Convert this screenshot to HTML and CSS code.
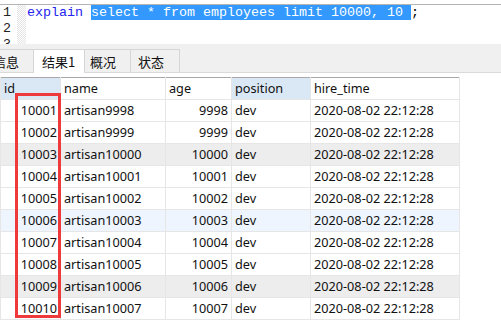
FILE: index.html
```html
<!DOCTYPE html>
<html lang="zh">
<head>
  <meta charset="UTF-8">
  <title>explain limit</title>
  <link rel="stylesheet" href="styles.css">
</head>
<body>

  <div class="editor">
    <div class="gutter">
      <div class="nums">
        <div>1</div>
        <div>2</div>
        <div>3</div>
      </div>
      <div class="fold"></div>
    </div>
    <div class="code">
      <div class="line"><span class="kw">explain</span> <span class="sel">select * from employees limit 10000, 10 </span>;</div>
      <div class="line"></div>
      <div class="line"></div>
    </div>
  </div>

  <div class="tabbar">
    <div class="tab first">信息</div>
    <div class="tab active">结果1</div>
    <div class="tab t3">概况</div>
    <div class="tab t4">状态</div>
  </div>

  <div class="result">
    <table class="grid">
      <colgroup>
        <col class="c-id">
        <col class="c-name">
        <col class="c-age">
        <col class="c-pos">
        <col class="c-hire">
      </colgroup>
      <thead>
        <tr>
          <th class="hl">id</th>
          <th>name</th>
          <th>age</th>
          <th class="hl">position</th>
          <th>hire_time</th>
        </tr>
      </thead>
      <tbody>
        <tr><td class="num">10001</td><td>artisan9998</td><td class="num">9998</td><td>dev</td><td>2020-08-02 22:12:28</td></tr>
        <tr><td class="num">10002</td><td>artisan9999</td><td class="num">9999</td><td>dev</td><td>2020-08-02 22:12:28</td></tr>
        <tr class="alt"><td class="num">10003</td><td>artisan10000</td><td class="num">10000</td><td>dev</td><td>2020-08-02 22:12:28</td></tr>
        <tr><td class="num">10004</td><td>artisan10001</td><td class="num">10001</td><td>dev</td><td>2020-08-02 22:12:28</td></tr>
        <tr><td class="num">10005</td><td>artisan10002</td><td class="num">10002</td><td>dev</td><td>2020-08-02 22:12:28</td></tr>
        <tr class="hover"><td class="num">10006</td><td>artisan10003</td><td class="num">10003</td><td>dev</td><td>2020-08-02 22:12:28</td></tr>
        <tr><td class="num">10007</td><td>artisan10004</td><td class="num">10004</td><td>dev</td><td>2020-08-02 22:12:28</td></tr>
        <tr><td class="num">10008</td><td>artisan10005</td><td class="num">10005</td><td>dev</td><td>2020-08-02 22:12:28</td></tr>
        <tr class="alt"><td class="num">10009</td><td>artisan10006</td><td class="num">10006</td><td>dev</td><td>2020-08-02 22:12:28</td></tr>
        <tr><td class="num">10010</td><td>artisan10007</td><td class="num">10007</td><td>dev</td><td>2020-08-02 22:12:28</td></tr>
      </tbody>
    </table>
    <!-- red box drawn over the id column -->
    <div class="mark"></div>
  </div>

</body>
</html>
```

FILE: styles.css
```css
body {
  margin: 0;
  background: #fff;
  color: #111;
  font-family: "Noto Sans", "Noto Sans CJK SC", sans-serif;
  font-size: 12.7px;
  overflow: hidden;
}

.editor {
  display: flex;
  margin-top: 4px;
  height: 39px;
  border-top: 1px solid #b4b4b4;
  overflow: hidden;
}

.gutter {
  display: flex;
  width: 26px;
  flex: none;
}

.nums {
  width: 17px;
  padding-left: 3px;
  box-sizing: border-box;
  font-family: "Liberation Mono", monospace;
  font-size: 13.33px;
  line-height: 16px;
  color: #222;
}

.fold {
  flex: 1;
  background: repeating-conic-gradient(#e4e4e4 0 25%, #fff 0 50%) 0 0 / 2px 2px;
}

.code {
  padding-left: 1px;
  font-family: "Liberation Mono", monospace;
  font-size: 13.33px;
  line-height: 16px;
  color: #000;
}

.line {
  height: 16px;
  white-space: pre;
}

.kw {
  color: #2323f0;
}

.sel {
  background: #3399ff;
  color: #fff;
}

.tabbar {
  display: flex;
  align-items: flex-end;
  height: 28px;
  background: #f0f0f0;
  border-bottom: 1px solid #dadada;
}

.tab {
  height: 23px;
  line-height: 23px;
  padding-left: 7px;
  box-sizing: border-box;
  border: 1px solid #d6d6d6;
  border-bottom: none;
  margin-right: -1px;
  font-family: "Noto Sans CJK SC", sans-serif;
  font-size: 13px;
  color: #111;
}

.tab.first {
  width: 51px;
  margin-left: -17px;
  padding-left: 9px;
}

.tab.active {
  width: 52px;
  height: 24px;
  background: #fff;
  padding-left: 8px;
  margin-bottom: -1px;
}

.tab.t3 {
  width: 47px;
  padding-left: 5px;
}

.tab.t4 {
  width: 50px;
}

.result {
  position: relative;
  padding-top: 4px;
}

.grid {
  border-collapse: collapse;
  table-layout: fixed;
  width: 459px;
  border-top: 1px solid #a8a8a8;
}

.c-id { width: 60px; }
.c-name { width: 105px; }
.c-age { width: 66px; }
.c-pos { width: 79px; }
.c-hire { width: 149px; }

.grid th,
.grid td {
  height: 21px;
  padding: 0 3px;
  border: 1px solid #e6e6e6;
  border-top: none;
  text-align: left;
  font-weight: normal;
  white-space: nowrap;
  overflow: hidden;
  line-height: 21px;
}

.grid th.hl {
  background: #dae8f6;
}

.grid td.num {
  text-align: right;
}

.grid tr.alt td {
  background: #ededed;
}

.grid tr.hover td {
  background: #eef5fe;
}

.mark {
  position: absolute;
  left: 15px;
  top: 20px;
  width: 40px;
  height: 219px;
  border: 3px solid #ee3a3a;
}
```
